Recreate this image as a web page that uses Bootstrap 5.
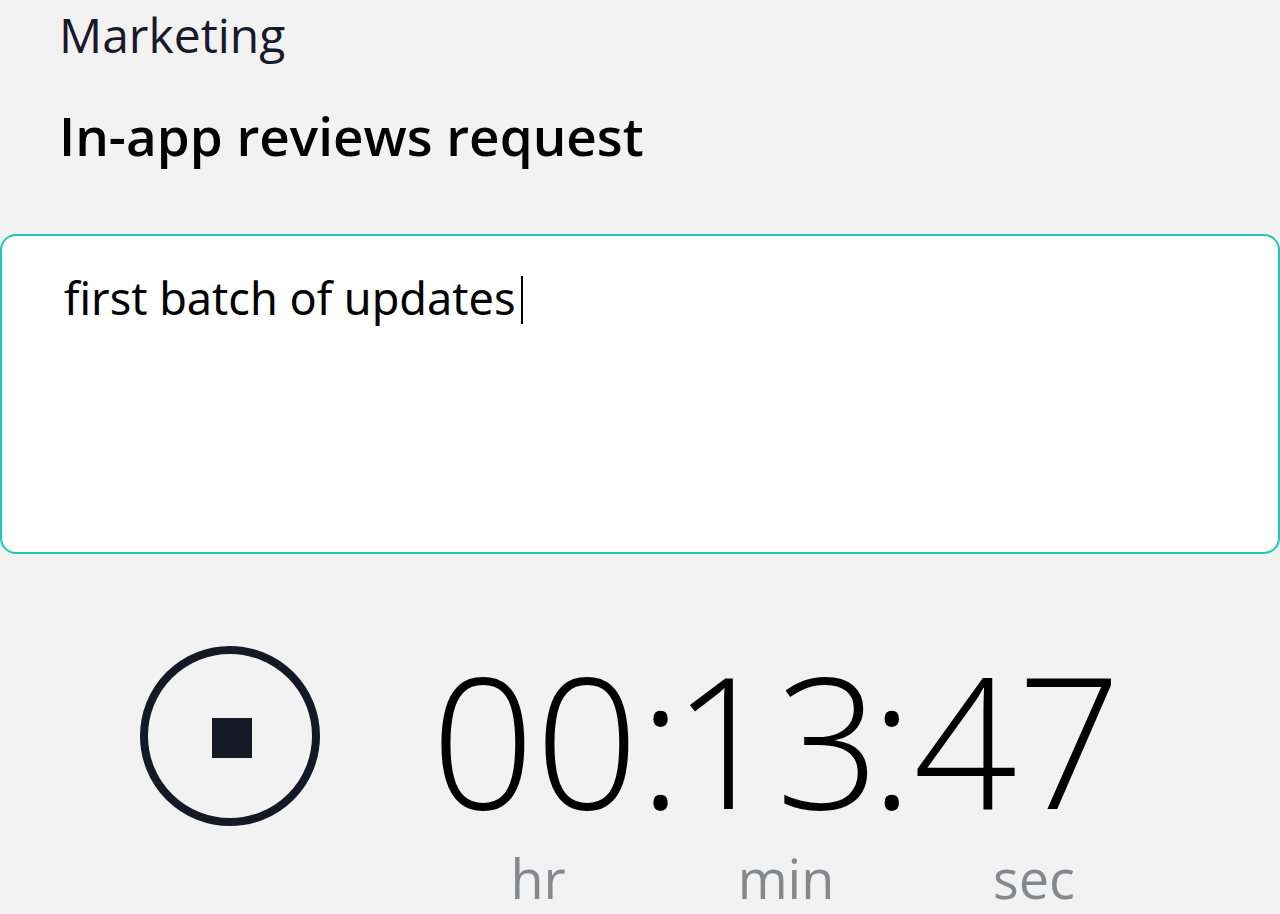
<!DOCTYPE html>
<html lang="en">
<head>
<meta charset="utf-8">
<meta name="viewport" content="width=device-width, initial-scale=1">
<title>In-app reviews request</title>
<link href="https://cdn.jsdelivr.net/npm/bootstrap@5.3.0/dist/css/bootstrap.min.css" rel="stylesheet">
<style>
body { background: #f2f2f2; color: #000; font-family: "Open Sans", "Noto Sans", sans-serif; }
.entry-head { padding: 0 59px; }
.project { font-size: 48px; line-height: 70px; color: #181a2b; }
.task { font-size: 53px; line-height: 72px; font-weight: 600; margin-top: 30px; }
.note-wrap { margin-top: 62px; }
.note { height: 320px; padding: 26px 62px; border: 2px solid #1fc9b4; border-radius: 16px; font-family: "Noto Sans", sans-serif; font-size: 45px; line-height: 72px; color: #000; background: #fff; caret-color: transparent; resize: none; outline: 0; overflow: hidden; }
.note-caret { position: absolute; left: 521px; top: 42px; width: 2px; height: 48px; background: #000; }
.timer { padding: 92px 0 0 140px; }
.stop { width: 180px; height: 180px; border: 8px solid #151925; padding: 4px 0 0 4px; }
.readout { margin-left: 94px; }
.digits { font-weight: 300; font-size: 182px; line-height: 184px; padding-left: 17px; }
.minutes { margin: 0 -10px; }
.units { display: grid; grid-template-columns: repeat(3, 248px); font-size: 54px; line-height: 72px; margin-top: 12px; height: 72px; color: #85888d; text-align: center; }
</style>
</head>
<body>
<main class="overflow-hidden">
  <header class="entry-head">
    <div class="project">Marketing</div>
    <h1 class="task mb-0">In-app reviews request</h1>
  </header>
  <div class="note-wrap position-relative">
    <textarea class="note d-block w-100" aria-label="Description" spellcheck="false">first batch of updates</textarea>
    <span class="note-caret" aria-hidden="true"></span>
  </div>
  <section class="timer d-flex align-items-start" aria-label="Timer">
    <button type="button" class="stop rounded-circle bg-transparent d-flex align-items-center justify-content-center flex-shrink-0" aria-label="Stop">
      <svg width="40" height="40" aria-hidden="true"><rect width="40" height="40" fill="#151925"/></svg>
    </button>
    <div class="readout">
      <div class="digits d-flex"><span>00</span><span>:</span><span class="minutes">13</span><span>:</span><span>47</span></div>
      <div class="units"><span>hr</span><span>min</span><span>sec</span></div>
    </div>
  </section>
</main>
<script src="https://cdn.jsdelivr.net/npm/bootstrap@5.3.0/dist/js/bootstrap.bundle.min.js"></script>
</body>
</html>
